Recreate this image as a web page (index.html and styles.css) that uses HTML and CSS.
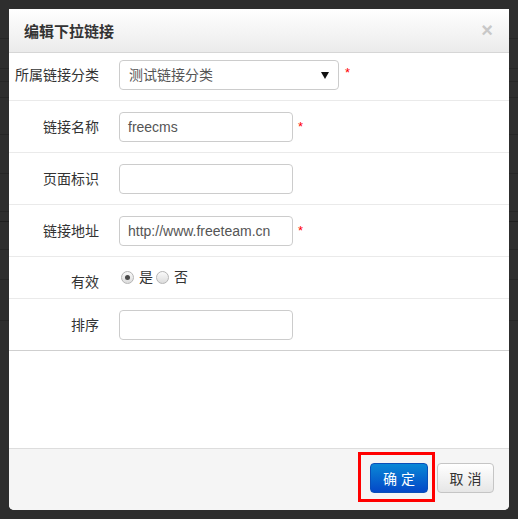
FILE: index.html
```html
<!DOCTYPE html>
<html lang="zh-CN">
<head>
  <meta charset="UTF-8">
  <title>编辑下拉链接</title>
  <link rel="stylesheet" href="styles.css">
</head>
<body>
  <div class="page">
    <div class="page-row h39"></div>
    <div class="page-row h30"></div>
    <div class="page-row h13"></div>
    <div class="page-row h16"></div>
    <div class="page-row h37"></div>
    <div class="page-row h39"></div>
    <div class="page-row h38"></div>
    <div class="page-row h10"></div>
    <div class="page-row h28"></div>
    <div class="page-row h30"></div>
    <div class="page-row h41"></div>
  </div>

  <div class="modal">
    <div class="modal-header">
      <h3>编辑下拉链接</h3>
      <span class="close">×</span>
    </div>
    <div class="modal-body">
      <div class="form-row first">
        <label>所属链接分类</label>
        <div class="select"><span>测试链接分类</span><span class="arrow"></span></div>
        <span class="req">*</span>
      </div>
      <div class="form-row">
        <label>链接名称</label>
        <div class="input">freecms</div>
        <span class="req">*</span>
      </div>
      <div class="form-row">
        <label>页面标识</label>
        <div class="input"></div>
      </div>
      <div class="form-row">
        <label>链接地址</label>
        <div class="input">http://www.freeteam.cn</div>
        <span class="req">*</span>
      </div>
      <div class="form-row radios">
        <label>有效</label>
        <div class="radio-group">
          <span class="radio checked"></span><span class="radio-text">是</span>
          <span class="radio"></span><span class="radio-text">否</span>
        </div>
      </div>
      <div class="form-row last">
        <label>排序</label>
        <div class="input"></div>
      </div>
    </div>
    <div class="modal-footer">
      <span class="btn-wrap">
        <button class="btn btn-primary">确 定</button>
        <span class="mark"></span>
      </span>
      <button class="btn">取 消</button>
    </div>
  </div>
</body>
</html>
```

FILE: styles.css
```css
body {
  margin: 0;
  background: #2e2e2e;
  font-family: "Liberation Sans", "Noto Sans CJK SC", sans-serif;
  font-size: 14px;
  color: #333;
  position: relative;
  height: 519px;
  overflow: hidden;
}
.page-row { border-bottom: 1px solid #262626; }
.h10 { height: 9px; border-bottom-color: #1f1f1f; }
.h13 { height: 12px; }
.h16 { height: 15px; }
.h28 { height: 27px; }
.h30 { height: 29px; }
.h37 { height: 36px; }
.h38 { height: 37px; }
.h39 { height: 38px; }
.h41 { height: 40px; }

.modal {
  position: absolute;
  top: 9px;
  left: 9px;
  width: 500px;
  height: 501px;
  background: #fff;
  border-radius: 0 0 5px 5px;
  display: flex;
  flex-direction: column;
  overflow: hidden;
}
.modal-header {
  height: 43px;
  flex-shrink: 0;
  border-bottom: 1px solid #d6d6d6;
  background: linear-gradient(#fff, #ebebeb);
  display: flex;
  align-items: center;
  justify-content: space-between;
  padding: 0 15px;
}
.modal-header h3 {
  margin: 0;
  font-size: 15px;
  font-weight: bold;
  color: #333;
}
.close {
  font-size: 20px;
  font-weight: bold;
  color: #c8c8c8;
  margin-right: 1px;
}
.modal-body { flex: 1; }

.form-row {
  display: flex;
  align-items: flex-start;
  padding: 11px 0 10px;
  border-bottom: 1px solid #eaeaea;
}
.form-row.first { padding-top: 7px; }
.form-row.radios { padding: 10px 0 1px; }
.form-row.last { border-bottom-color: #cfcfcf; }
.form-row label {
  width: 90px;
  margin-right: 20px;
  text-align: right;
  line-height: 30px;
  white-space: nowrap;
  flex-shrink: 0;
}
.input, .select {
  box-sizing: border-box;
  height: 30px;
  line-height: 28px;
  border: 1px solid #ccc;
  border-radius: 4px;
  padding: 0 8px;
  color: #555;
  width: 174px;
}
.select {
  width: 220px;
  padding: 0 9px;
  display: flex;
  align-items: center;
}
.arrow {
  margin-left: auto;
  border-left: 4px solid transparent;
  border-right: 4px solid transparent;
  border-top: 7px solid #111;
}
.req {
  color: #f00;
  font-size: 13px;
  line-height: 30px;
  margin-left: 5px;
}
.first .req { margin-left: 6px; line-height: 26px; }

.radio-group {
  display: flex;
  align-items: center;
  margin: 4px 0 0 2px;
  height: 13px;
}
.radio {
  width: 11px;
  height: 11px;
  border: 1px solid #b5b5b5;
  border-radius: 50%;
  background: linear-gradient(#fafafa, #dcdcdc);
  display: flex;
  align-items: center;
  justify-content: center;
}
.radio.checked::after {
  content: "";
  width: 5px;
  height: 5px;
  border-radius: 50%;
  background: #4a4a4a;
}
.radio-text { margin: 0 3px 0 5px; line-height: 13px; }

.modal-footer {
  height: 47px;
  flex-shrink: 0;
  border-top: 1px solid #ddd;
  background: #f5f5f5;
  display: flex;
  justify-content: flex-end;
  align-items: flex-start;
  padding: 14px 15px 0 0;
  gap: 9px;
}
.btn-wrap { position: relative; display: flex; }
.btn {
  height: 30px;
  width: 57px;
  font-family: "Liberation Sans", "Noto Sans CJK SC", sans-serif;
  font-size: 14px;
  color: #333;
  border: 1px solid #c5c5c5;
  border-radius: 4px;
  background: linear-gradient(#fff, #e6e6e6);
  padding: 0;
}
.btn-primary {
  width: 58px;
  color: #fff;
  border-color: #0a4fb8;
  background: linear-gradient(#0a88d6, #0448c8);
}
.mark {
  position: absolute;
  left: -12px;
  top: -11px;
  width: 71px;
  height: 44px;
  border: 3px solid #f00;
}
```
